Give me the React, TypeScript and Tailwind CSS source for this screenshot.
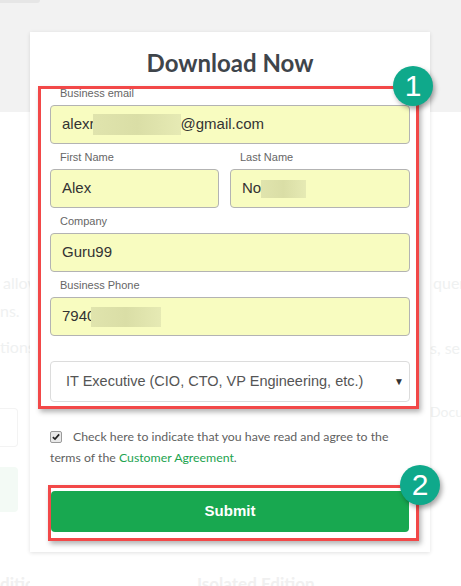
import React from 'react';

const fieldInput =
  'h-[39px] w-full rounded-[4px] border border-[#b3b3b3] bg-[#f8fcc0] px-[11px] flex items-center text-[15px] text-[#333] font-["Liberation_Sans",Arial,sans-serif]';
const fieldLabel =
  'h-[16px] pl-[10px] text-[11px] leading-[16px] text-[#666] font-["Liberation_Sans",Arial,sans-serif]';

function Blur({ className }: { className: string }) {
  return <span className={`inline-block bg-gradient-to-r from-[#e0e4ad] via-[#dadea6] to-[#e6eab4] ${className}`} />;
}

function Badge({ n, className }: { n: string; className: string }) {
  return (
    <div
      className={`absolute flex h-[40px] w-[40px] items-center justify-center rounded-full bg-[#0fa98b] text-[30px] leading-none text-white shadow-[2px_3px_5px_rgba(0,0,0,0.35)] font-["Liberation_Sans",Arial,sans-serif] ${className}`}
    >
      {n}
    </div>
  );
}

export default function App() {
  return (
    <div className="relative h-[586px] w-[461px] overflow-hidden bg-white font-['Lato',sans-serif]">
      {/* page behind the form */}
      <div className="flex h-full flex-col">
        <div className="h-[112px] shrink-0 bg-[#f2f2f2]">
          <div className="h-[3px] w-[40px] rounded-br bg-[#e6e6e6]" />
        </div>
        <div className="flex min-h-0 flex-1 text-[16px] text-[#eff1f1]">
          <div className="w-[30px] overflow-hidden whitespace-nowrap">
            <div className="mt-[157px] pl-[3px] leading-[28px]">allow</div>
            <div className="leading-[28px]">ns.</div>
            <div className="mt-[8px] leading-[28px]">tions,</div>
            <div className="mt-[47px] h-[39px] w-[18px] rounded-r border border-l-0 border-[#f3f3f3]" />
            <div className="mt-[20px] h-[45px] w-[18px] rounded-r bg-[#f3faf5]" />
            <div className="mt-[58px] text-[17px] font-bold leading-[28px] text-[#f0f0f0]">dition</div>
          </div>
          <div className="flex flex-1 flex-col justify-end pl-[167px]">
            <div className="mb-[-12px] text-[17px] font-bold leading-[28px] text-[#f0f0f0]">Isolated Edition</div>
          </div>
          <div className="w-[31px] overflow-hidden whitespace-nowrap">
            <div className="mt-[157px] pl-[3px] leading-[28px]">query</div>
            <div className="mt-[37px] leading-[28px]">s, se</div>
            <div className="mt-[36px] text-[14px] leading-[28px]">Docum</div>
          </div>
        </div>
      </div>

      {/* download form */}
      <div className="absolute left-[30px] top-[32px] h-[520px] w-[400px] bg-white px-[20px] pt-[17px] shadow-[0_1px_4px_rgba(0,0,0,0.12)]">
        <h1 className="text-center text-[24px] font-bold leading-[28px] text-[#3f454b]">Download Now</h1>

        <div className="mt-[8px]">
          <div className={fieldLabel}>Business email</div>
          <div className={`mt-[4px] ${fieldInput}`}>
            alexr
            <Blur className="-ml-[2px] h-[21px] w-[88px]" />
            @gmail.com
          </div>
        </div>

        <div className="mt-[5px] flex gap-[11px]">
          <div className="w-[169px]">
            <div className={fieldLabel}>First Name</div>
            <div className={`mt-[4px] ${fieldInput}`}>Alex</div>
          </div>
          <div className="flex-1">
            <div className={fieldLabel}>Last Name</div>
            <div className={`mt-[4px] ${fieldInput}`}>
              No
              <Blur className="h-[18px] w-[45px]" />
            </div>
          </div>
        </div>

        <div className="mt-[5px]">
          <div className={fieldLabel}>Company</div>
          <div className={`mt-[4px] ${fieldInput}`}>Guru99</div>
        </div>

        <div className="mt-[5px]">
          <div className={fieldLabel}>Business Phone</div>
          <div className={`mt-[4px] ${fieldInput}`}>
            7940
            <Blur className="-ml-[4px] h-[20px] w-[70px]" />
          </div>
        </div>

        <div className="mt-[25px] flex h-[41px] items-center justify-between whitespace-nowrap rounded-[4px] border border-[#dcdcdc] bg-white pl-[15px] pr-[5px] text-[14.5px] text-[#555] font-['Liberation_Sans',Arial,sans-serif]">
          <span>IT Executive (CIO, CTO, VP Engineering, etc.)</span>
          <span className="text-[10px] text-[#333]">▼</span>
        </div>

        <p className="mt-[24px] text-[12.3px] leading-[21px] text-[#5f5f5f]">
          <span className="mr-[11px] inline-flex h-[12px] w-[12px] translate-y-[1px] items-center justify-center rounded-[2px] border border-[#9a9a9a] bg-[#e9e9e9] align-baseline">
            <svg viewBox="0 0 12 12" className="h-[10px] w-[10px]">
              <path d="M2.2 6.2 L4.8 8.6 L9.8 2.8" fill="none" stroke="#222" strokeWidth="2" />
            </svg>
          </span>
          Check here to indicate that you have read and agree to the terms of the{' '}
          <span className="text-[#1ca34f]">Customer Agreement</span>.
        </p>

        <button className="mt-[23px] ml-[1px] flex h-[41px] w-[358px] items-center justify-center rounded-[4px] bg-[#18a850] text-[15px] font-bold text-white font-['Liberation_Sans',Arial,sans-serif]">
          Submit
        </button>

        {/* annotations */}
        <div className="pointer-events-none absolute left-[8px] top-[54px] h-[323px] w-[381px] border-[3px] border-[#f24848] shadow-[2px_3px_5px_rgba(0,0,0,0.3)]" />
        <div className="pointer-events-none absolute left-[18px] top-[453px] h-[56px] w-[371px] border-[3px] border-[#f24848] shadow-[2px_3px_5px_rgba(0,0,0,0.3)]" />
        <Badge n="1" className="left-[363px] top-[34px]" />
        <Badge n="2" className="left-[370px] top-[433px]" />
      </div>
    </div>
  );
}
